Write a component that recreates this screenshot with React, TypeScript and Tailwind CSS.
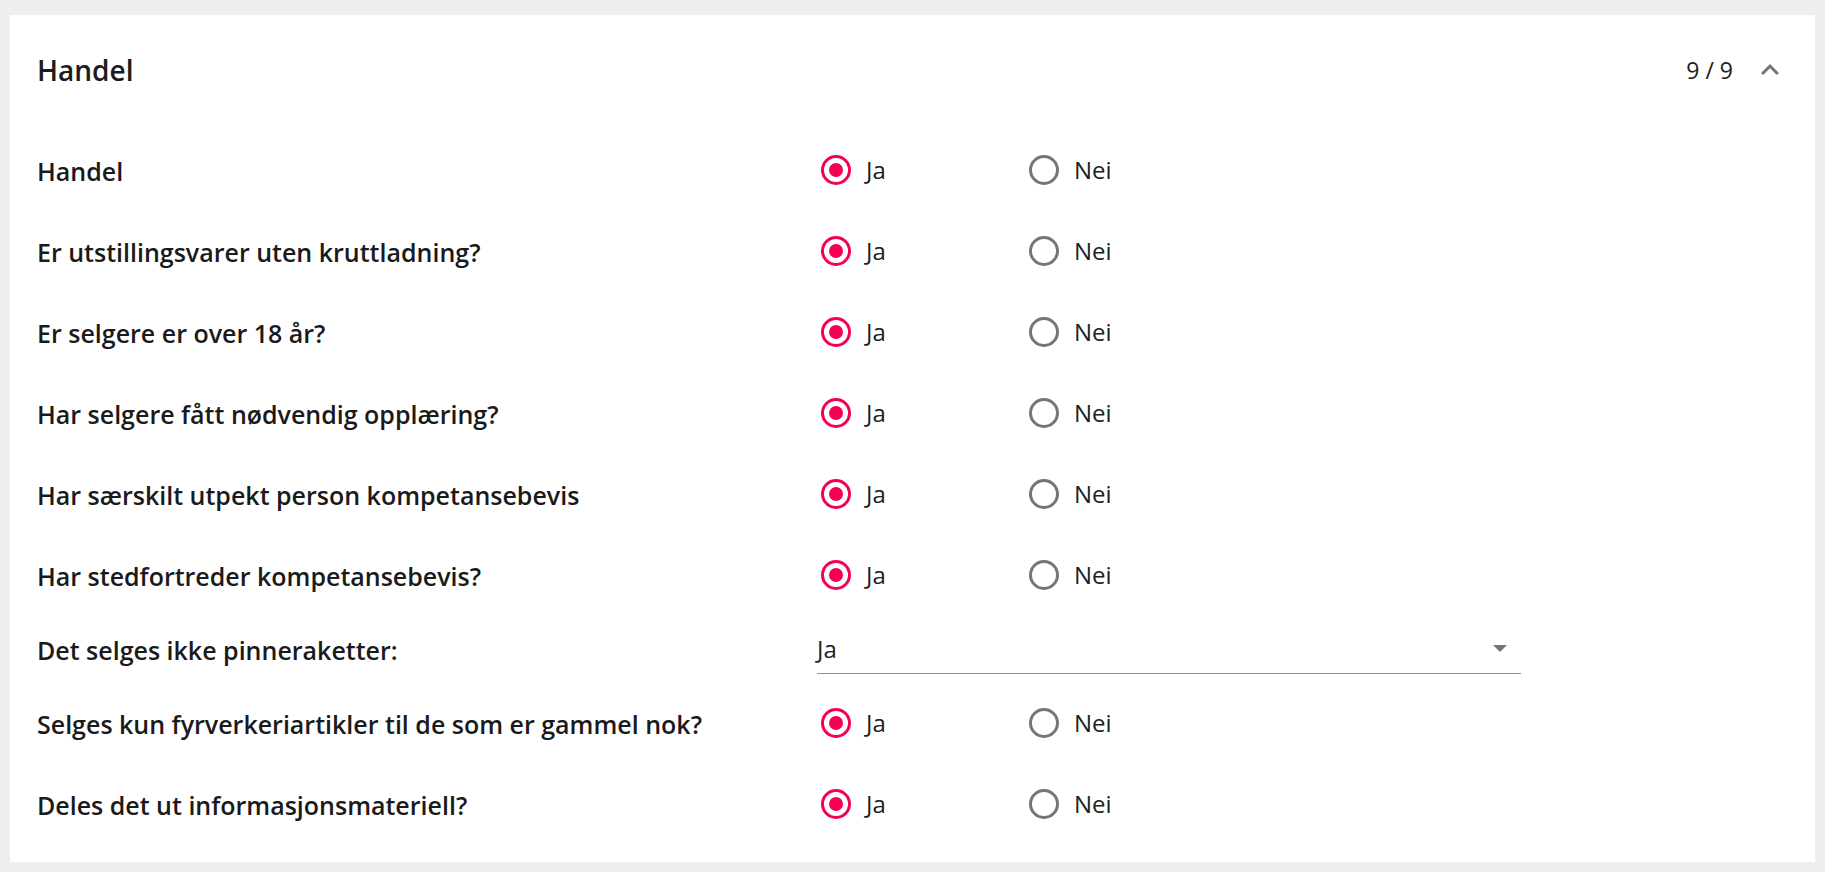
import React from "react";

const rows: { label: string; type: "radio" | "select" }[] = [
  { label: "Handel", type: "radio" },
  { label: "Er utstillingsvarer uten kruttladning?", type: "radio" },
  { label: "Er selgere er over 18 år?", type: "radio" },
  { label: "Har selgere fått nødvendig opplæring?", type: "radio" },
  { label: "Har særskilt utpekt person kompetansebevis", type: "radio" },
  { label: "Har stedfortreder kompetansebevis?", type: "radio" },
  { label: "Det selges ikke pinneraketter:", type: "select" },
  { label: "Selges kun fyrverkeriartikler til de som er gammel nok?", type: "radio" },
  { label: "Deles det ut informasjonsmateriell?", type: "radio" },
];

function Radio({ checked, label }: { checked: boolean; label: string }) {
  return (
    <div className="flex items-center w-[208px]">
      <div className="w-[61px] h-[59px] flex items-center justify-center shrink-0">
        {checked ? (
          <div className="w-[30px] h-[30px] rounded-full border-[3px] border-[#f50057] flex items-center justify-center">
            <div className="w-[14px] h-[14px] rounded-full bg-[#f50057]" />
          </div>
        ) : (
          <div className="w-[30px] h-[30px] rounded-full border-[3px] border-[#757575]" />
        )}
      </div>
      <span className="text-[24px] text-[#212121] leading-none">{label}</span>
    </div>
  );
}

export default function App() {
  return (
    <div
      className="min-h-screen bg-[#efefef] px-[10px] pt-[15px] pb-[10px]"
      style={{ fontFamily: '"Open Sans", "Noto Sans", sans-serif' }}
    >
      <div className="bg-white px-[27px] pb-[18px]">
        <div className="h-[110px] flex items-center justify-between">
          <h1 className="text-[28px] text-[#1c1c1c] font-semibold leading-none">Handel</h1>
          <div className="flex items-center gap-[19px]">
            <span className="text-[23px] text-[#212121] leading-none">9 / 9</span>
            <svg width="36" height="36" viewBox="0 0 24 24" fill="#757575">
              <path d="M12 8l-6 6 1.41 1.41L12 10.83l4.59 4.58L18 14z" />
            </svg>
          </div>
        </div>
        <div className="mt-[4px] flex flex-col">
          {rows.map((r, i) =>
            r.type === "radio" ? (
              <div key={i} className="h-[81px] flex items-center">
                <div className="w-[768px] pt-[3px] text-[25px] font-semibold text-[#1a1a1a] leading-none">
                  {r.label}
                </div>
                <div className="flex items-center">
                  <Radio checked label="Ja" />
                  <Radio checked={false} label="Nei" />
                </div>
              </div>
            ) : (
              <div key={i} className="h-[67px] flex items-center">
                <div className="w-[780px] pt-[3px] text-[25px] font-semibold text-[#1a1a1a] leading-none">
                  {r.label}
                </div>
                <div className="w-[704px] h-[48px] mt-[2px] border-b border-[#949494] flex items-center justify-between">
                  <span className="text-[24px] text-[#212121] leading-none">Ja</span>
                  <svg width="14" height="8" viewBox="0 0 14 8" className="mr-[14px]">
                    <path d="M0 0h14L7 7z" fill="#757575" />
                  </svg>
                </div>
              </div>
            )
          )}
        </div>
      </div>
    </div>
  );
}
